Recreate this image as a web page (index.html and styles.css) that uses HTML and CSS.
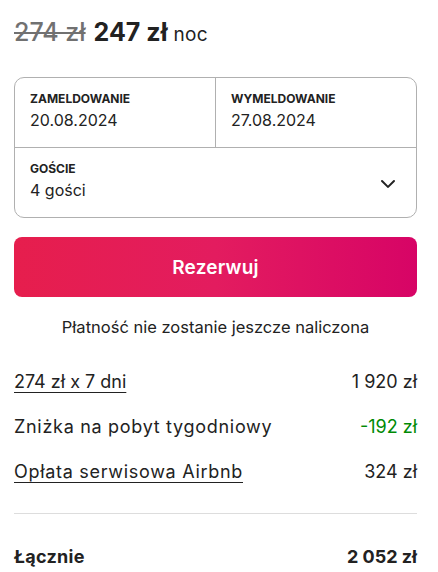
FILE: index.html
```html
<!DOCTYPE html>
<html lang="pl">
<head>
<meta charset="utf-8">
<link rel="stylesheet" href="styles.css">
</head>
<body>
<div class="card">
  <div class="price">
    <span class="old">274 zł</span>
    <span class="new">247 zł</span>
    <span class="per">noc</span>
  </div>
  <div class="picker">
    <div class="dates">
      <div class="cell">
        <div class="label">ZAMELDOWANIE</div>
        <div class="value">20.08.2024</div>
      </div>
      <div class="cell cell-right">
        <div class="label">WYMELDOWANIE</div>
        <div class="value">27.08.2024</div>
      </div>
    </div>
    <div class="guests">
      <div class="cell">
        <div class="label">GOŚCIE</div>
        <div class="value">4 gości</div>
      </div>
      <svg class="chev" viewBox="0 0 32 32" width="16" height="16" aria-hidden="true"><path d="M28 12 16.7 23.3a1 1 0 0 1-1.4 0L4 12" fill="none" stroke="#222" stroke-width="4" stroke-linecap="round" stroke-linejoin="round"/></svg>
    </div>
  </div>
  <button class="reserve">Rezerwuj</button>
  <p class="note">Płatność nie zostanie jeszcze naliczona</p>
  <div class="rows">
    <div class="row"><span class="u">274 zł x 7 dni</span><span>1 920 zł</span></div>
    <div class="row"><span class="txt">Zniżka na pobyt tygodniowy</span><span class="green">-192 zł</span></div>
    <div class="row"><span class="u txt">Opłata serwisowa Airbnb</span><span>324 zł</span></div>
  </div>
  <div class="total"><span class="txt">Łącznie</span><span>2 052 zł</span></div>
</div>
</body>
</html>
```
FILE: styles.css
```css
html, body { margin: 0; padding: 0; background: #fff; }
body { font-family: Inter, "Noto Sans", sans-serif; color: #222; }
.card { width: 403px; margin-left: 14px; padding-top: 15px; }
.price { display: flex; align-items: baseline; height: 34px; line-height: 34px; }
.old { font-size: 25px; color: #717171; text-decoration: line-through; text-decoration-thickness: 2px; font-weight: 500; margin-right: 8px; }
.new { font-size: 25px; font-weight: 700; color: #222; margin-right: 6px; }
.per { font-size: 19px; color: #222; letter-spacing: 0.3px; }
.picker { margin-top: 28px; border: 1px solid #b0b0b0; border-radius: 10px; }
.dates { display: flex; border-bottom: 1px solid #b0b0b0; }
.dates .cell { flex: 1; }
.cell { padding: 13px 15px 15px; }
.cell-right { border-left: 1px solid #b0b0b0; }
.label { font-size: 12px; font-weight: 700; line-height: 16px; letter-spacing: 0; }
.value { font-size: 16px; line-height: 24px; margin-top: 1px; }
.guests { display: flex; align-items: center; justify-content: space-between; padding-right: 20px; }
.chev { display: block; }
.reserve { display: block; width: 100%; height: 60px; margin-top: 19px; border: 0; border-radius: 8px; background: linear-gradient(to right, #e61e4d 0%, #e31c5f 50%, #d70466 100%); color: #fff; font-family: inherit; font-size: 19px; font-weight: 600; letter-spacing: 0.2px; }
.note { margin: 19px 0 0; text-align: center; font-size: 16.5px; line-height: 22px; color: #222; }
.rows { margin-top: 32px; display: flex; flex-direction: column; gap: 21px; }
.row { display: flex; justify-content: space-between; font-size: 18px; line-height: 24px; }
.txt { letter-spacing: 0.7px; }
.u { text-decoration: underline; text-underline-offset: 4px; text-decoration-thickness: 1px; }
.green { color: #008a05; }
.total { margin-top: 29px; border-top: 1px solid #ddd; padding-top: 31px; display: flex; justify-content: space-between; font-size: 18px; font-weight: 700; line-height: 24px; }
.total .txt { letter-spacing: 0.3px; }
```
